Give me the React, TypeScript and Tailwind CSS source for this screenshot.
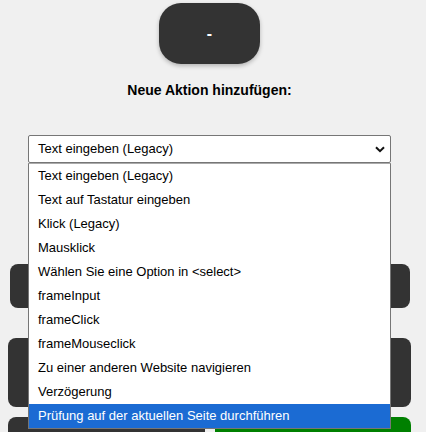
import React from 'react';

const options = [
    'Text eingeben (Legacy)',
    'Text auf Tastatur eingeben',
    'Klick (Legacy)',
    'Mausklick',
    'Wählen Sie eine Option in <select>',
    'frameInput',
    'frameClick',
    'frameMouseclick',
    'Zu einer anderen Website navigieren',
    'Verzögerung',
    'Prüfung auf der aktuellen Seite durchführen',
];

const App: React.FC = () => {
    return (
        <div className="h-[432px] overflow-hidden bg-[#f0f0f0] font-['Liberation_Sans',Arial,sans-serif] text-[13px] text-black">
            <div className="ml-2 w-[403px] flex flex-col items-center">
                <button className="mt-[3px] w-[101px] h-[61px] rounded-[22px] bg-[#333333] text-white text-[16px] font-bold shadow-[0_2px_4px_rgba(0,0,0,0.25)]">
                    -
                </button>

                <h4 className="mt-[18px] font-bold text-[14px] leading-[16px]">Neue Aktion hinzufügen:</h4>

                {/* select, shown open */}
                <div className="relative mt-[37px] w-[363px]">
                    <div className="h-[28px] bg-white border border-[#767676] rounded-[2px] flex items-center justify-between pl-[9px] pr-[5px]">
                        <span>Text eingeben (Legacy)</span>
                        <svg width="10" height="7" viewBox="0 0 10 7">
                            <path d="M1 1.2 L5 5.2 L9 1.2" fill="none" stroke="#111" strokeWidth="2" />
                        </svg>
                    </div>
                    <ul className="absolute left-0 top-[28px] z-10 w-[363px] bg-white border border-[#767676] border-t-[#aaaaaa]">
                        {options.map((opt, i) => (
                            <li
                                key={opt}
                                className={
                                    i === options.length - 1
                                        ? 'h-[24px] leading-[24px] pl-[9px] bg-[#1b6bd3] text-white'
                                        : 'h-[24px] leading-[24px] pl-[9px]'
                                }
                            >
                                {opt}
                            </li>
                        ))}
                    </ul>
                </div>

                {/* content behind the dropdown */}
                <div className="mt-[101px] w-[400px] h-[44px] rounded-[8px] bg-[#333333]" />
                <div className="mt-[30px] w-[403px] h-[69px] rounded-[8px] bg-[#333333]" />
                <div className="mt-[10px] w-[403px] flex gap-[10px]">
                    <div className="w-[197px] h-[44px] rounded-[8px] bg-[#333333]" />
                    <div className="flex-1 h-[44px] rounded-[8px] bg-[#008000]" />
                </div>
            </div>
        </div>
    );
};

export default App;
